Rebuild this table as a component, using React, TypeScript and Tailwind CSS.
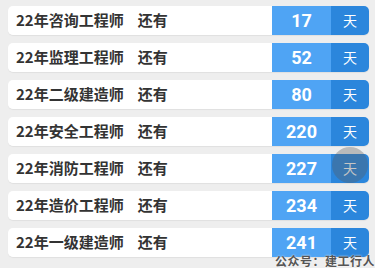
const rows = [
  { name: "22年咨询工程师", days: 17 },
  { name: "22年监理工程师", days: 52 },
  { name: "22年二级建造师", days: 80 },
  { name: "22年安全工程师", days: 220 },
  { name: "22年消防工程师", days: 227 },
  { name: "22年造价工程师", days: 234 },
  { name: "22年一级建造师", days: 241 },
];

export default function App() {
  return (
    <div
      className="relative w-[375px] h-[268px] overflow-hidden bg-[#eeeeee] pt-[6px] pl-[8px] pr-[6px]"
      style={{ fontFamily: '"Noto Sans CJK SC", "Noto Sans", sans-serif' }}
    >
      <div className="flex flex-col gap-[8px]">
        {rows.map((r) => (
          <div
            key={r.name}
            className="flex h-[29px] rounded-[5px] overflow-hidden shadow-[0_1px_1px_rgba(0,0,0,0.06)]"
          >
            <div className="flex-1 flex items-center bg-white pl-[8px] text-[15px] font-bold text-[#333333]">
              <span>{r.name}</span>
              <span className="ml-[14px]">还有</span>
            </div>
            <div
              className="w-[59px] flex items-center justify-center bg-[#4fa4f4] text-white text-[18px] font-bold"
              style={{ fontFamily: 'Roboto, "Liberation Sans", sans-serif' }}
            >
              {r.days}
            </div>
            <div className="w-[38px] flex items-center justify-center bg-[#2b86dc] text-white text-[14px]">
              天
            </div>
          </div>
        ))}
      </div>
      {/* touch ripple */}
      <div className="absolute left-[332px] top-[147px] w-[36px] h-[36px] rounded-full bg-[rgba(90,90,90,0.35)]" />
      {/* watermark */}
      <div className="absolute right-[0px] bottom-[-2px] text-[12px] font-bold text-[#555555] tracking-[0.5px] [text-shadow:0_0_2px_#fff]">
        公众号：建工行人
      </div>
    </div>
  );
}
